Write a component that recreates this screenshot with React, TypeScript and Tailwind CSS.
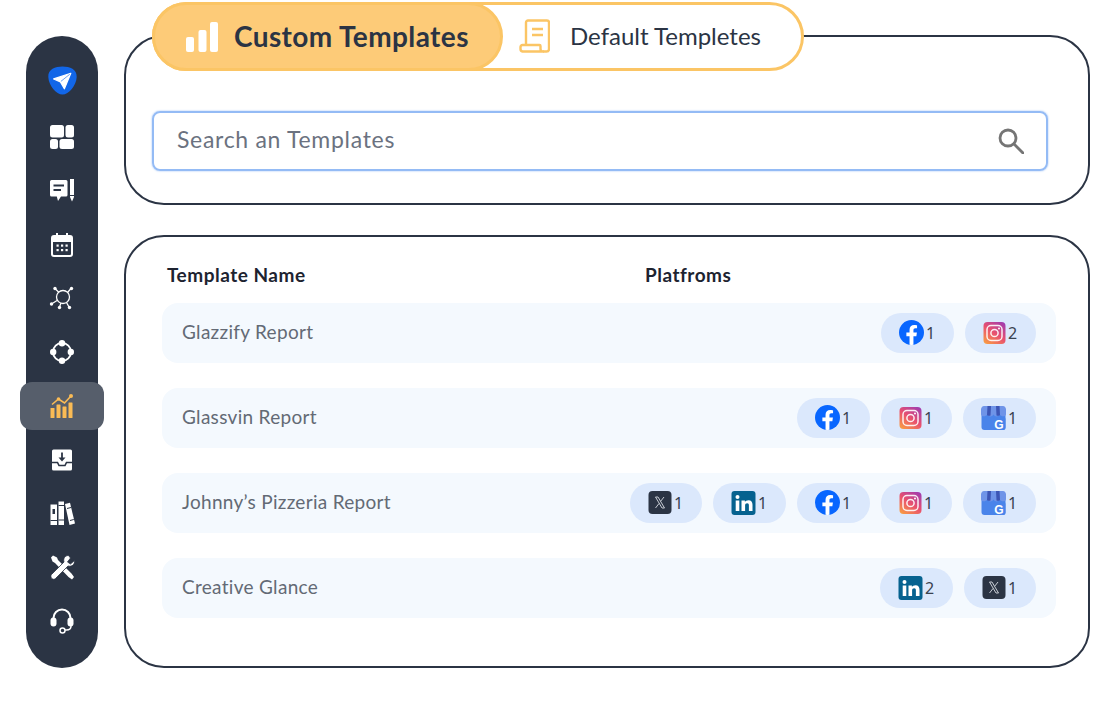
import React from 'react';

const navy = '#2b3444';

const SendLogo = () => (
  <svg width="29" height="29" viewBox="0 0 28 28">
    <path d="M14 0.500C21 0.500 28 3 27.700 10.500C27.400 18.500 20 27.500 14 27.500C8 27.500 0.600 18.500 0.300 10.500C0 3 7 0.500 14 0.500Z" fill="#1266e8" />
    <path d="M22 7L5.500 12.500L12 15.300L15.800 22Z" fill="#fff" stroke="#fff" strokeWidth="1.200" strokeLinejoin="round" />
    <path d="M21 8L12.500 14.800" stroke="#1266e8" strokeWidth="0.600" />
  </svg>
);

const GridIcon = () => (
  <svg width="24" height="24" viewBox="0 0 24 24" fill="#fff">
    <rect x="0" y="0" width="14" height="12.500" rx="2.500" />
    <rect x="15.500" y="0" width="8.500" height="12.500" rx="2.500" />
    <rect x="0" y="14" width="8" height="10" rx="2.500" />
    <rect x="9.500" y="14" width="14.500" height="10" rx="2.500" />
  </svg>
);

const CommentIcon = () => (
  <svg width="24" height="24" viewBox="0 0 24 24">
    <path d="M1.500 1H16a1.500 1.500 0 0 1 1.500 1.500V16a1.500 1.500 0 0 1-1.500 1.500h-5L8 22l-1.200-4.500H1.500A1.500 1.500 0 0 1 0 16V2.500A1.500 1.500 0 0 1 1.500 1Z" fill="#fff" />
    <path d="M3.500 6.500H14M3.500 11H11" stroke={navy} strokeWidth="1.800" />
    <path d="M20 0H24V18L22 22.500L20 18Z" fill="#fff" />
    <path d="M20 16.500H24" stroke={navy} strokeWidth="1" />
  </svg>
);

const CalendarIcon = () => (
  <svg width="24" height="24" viewBox="0 0 24 24" fill="#fff">
    <path d="M6 0h2v3H6zM16 0h2v3h-2z" />
    <path d="M4 2h16a3 3 0 0 1 3 3v16a3 3 0 0 1-3 3H4a3 3 0 0 1-3-3V5a3 3 0 0 1 3-3Zm-1 7v12a1 1 0 0 0 1 1h16a1 1 0 0 0 1-1V9Z" fillRule="evenodd" />
    <rect x="6.500" y="11.500" width="2.200" height="2.200" />
    <rect x="11" y="11.500" width="2.200" height="2.200" />
    <rect x="15.500" y="11.500" width="2.200" height="2.200" />
    <rect x="6.500" y="16" width="2.200" height="2.200" />
    <rect x="11" y="16" width="2.200" height="2.200" />
    <rect x="15.500" y="16" width="2.200" height="2.200" />
  </svg>
);

const HubIcon = () => (
  <svg width="26" height="26" viewBox="0 0 26 26" fill="#fff" stroke="#fff">
    <circle cx="14" cy="12" r="6.500" fill="none" strokeWidth="1.300" />
    <path d="M6 3.500L10 7.500M22 3.500L18.500 7.500M2.500 19L8 15.500M10.500 22L12 18M20 22L17.500 17.500" strokeWidth="1.300" fill="none" />
    <circle cx="6" cy="3.500" r="1.700" stroke="none" />
    <circle cx="22.500" cy="3.500" r="1.700" stroke="none" />
    <circle cx="2.500" cy="19" r="1.700" stroke="none" />
    <circle cx="10.500" cy="22.500" r="1.700" stroke="none" />
    <circle cx="20.500" cy="22.500" r="1.700" stroke="none" />
  </svg>
);

const OrbitIcon = () => (
  <svg width="24" height="24" viewBox="0 0 24 24" fill="#fff">
    <circle cx="12" cy="12" r="9" fill="none" stroke="#fff" strokeWidth="1.800" />
    <circle cx="12" cy="3.200" r="3.200" />
    <circle cx="12" cy="20.800" r="3.200" />
    <circle cx="3.200" cy="12" r="3.200" />
    <circle cx="20.800" cy="12" r="3.200" />
  </svg>
);

const ChartIcon = () => (
  <svg width="24" height="24" viewBox="0 0 24 24" fill="#fabb55">
    <rect x="0.500" y="14" width="4" height="10" rx="0.500" />
    <rect x="6.500" y="10.500" width="4" height="13.500" rx="0.500" />
    <rect x="12.500" y="12.500" width="4" height="11.500" rx="0.500" />
    <rect x="18.500" y="8.500" width="4" height="15.500" rx="0.500" />
    <path d="M2 10.500L8.500 5L14.500 9L21 2" fill="none" stroke="#fabb55" strokeWidth="1.600" />
    <circle cx="8.500" cy="5" r="1.800" />
    <circle cx="21" cy="2" r="2" />
  </svg>
);

const InboxIcon = () => (
  <svg width="24" height="24" viewBox="0 0 24 24">
    <rect x="2" y="1.500" width="20" height="21" rx="1.500" fill="#fff" />
    <path d="M12 4.500V11" stroke={navy} strokeWidth="1.800" />
    <path d="M8.500 9.500H15.500L12 13.500Z" fill={navy} />
    <path d="M2 14.500H7.500L9 17.500H15L16.500 14.500H22" fill="none" stroke={navy} strokeWidth="1.600" />
  </svg>
);

const BooksIcon = () => (
  <svg width="25" height="25" viewBox="0 0 25 25" fill="#fff">
    <path d="M0.500 3.500H7V24H0.500Z" />
    <path d="M8.500 0.500H14V24H8.500Z" />
    <path d="M15 3L20 1.800L25 22.500L19.500 24Z" />
    <path d="M2.500 8H5V13H2.500Z" fill={navy} />
    <path d="M8.500 4.500H14M8.500 19H14M0.500 19.500H7M17 7.500L21 6.500M20 19.500L23.800 18.500" stroke={navy} strokeWidth="1" />
  </svg>
);

const ToolsIcon = () => (
  <svg width="25" height="25" viewBox="0 0 25 25" fill="#fff">
    <path d="M1 2.500L3 0.500L7 2.500L8 5L21.500 18.500L24 22L22 24.500L18.500 22L5 8L2.500 6.500Z" />
    <path d="M24.500 5.500L20.500 9L17.500 7L20.500 3L18.500 0.500C15 0.500 13 3.500 14 7L1.500 19.500C-0.500 22 3 26 5.500 23.500L18 11C22 12 25 9.500 24.500 5.500Z" stroke={navy} strokeWidth="0.800" />
  </svg>
);

const HeadsetIcon = () => (
  <svg width="24" height="26" viewBox="0 0 24 26" fill="#fff">
    <path d="M3.500 11V10a8.500 8.500 0 0 1 17 0v1" fill="none" stroke="#fff" strokeWidth="2" />
    <rect x="0.500" y="9.500" width="6" height="9" rx="3" />
    <rect x="17.500" y="9.500" width="6" height="9" rx="3" />
    <path d="M21 18c0 2.500-2 4-4.500 4H15" fill="none" stroke="#fff" strokeWidth="1.500" />
    <circle cx="12.500" cy="22.500" r="2.500" fill="none" stroke="#fff" strokeWidth="1.500" />
  </svg>
);

const BarsIcon = () => (
  <svg width="32" height="30" viewBox="0 0 32 30" fill="#fff">
    <rect x="0" y="15" width="8" height="15" rx="2" />
    <rect x="12.500" y="8" width="8" height="22" rx="2" />
    <rect x="24" y="0" width="8" height="30" rx="2" />
  </svg>
);

const ScrollIcon = () => (
  <svg width="31" height="34" viewBox="0 0 31 34" fill="none" stroke="#fbc565" strokeWidth="2.400" strokeLinejoin="round">
    <path d="M7 26V3.500A2 2 0 0 1 9 1.500H28A2 2 0 0 1 30 3.500V30A2.500 2.500 0 0 1 27.500 32.500H24" />
    <path d="M3.500 26H20.500A1 1 0 0 1 21.500 27V30A2.500 2.500 0 0 0 24 32.500H3.500A2.500 2.500 0 0 1 1.500 30V28A2 2 0 0 1 3.500 26Z" />
    <path d="M13 10H24M13 16H24" />
  </svg>
);

const SearchIcon = () => (
  <svg width="26" height="26" viewBox="0 0 26 26" fill="none" stroke="#757575" strokeWidth="2.800">
    <circle cx="10" cy="10" r="8" />
    <path d="M16 16L25 25" strokeLinecap="round" />
  </svg>
);

const Facebook = () => (
  <svg width="25" height="25" viewBox="0 0 24 24">
    <clipPath id="fb-clip"><circle cx="12" cy="12" r="12" /></clipPath>
    <circle cx="12" cy="12" r="12" fill="#0866ff" />
    <path clipPath="url(#fb-clip)" d="M16.670 15.540L17.200 12.070H13.870V9.820C13.870 8.870 14.330 7.950 15.830 7.950H17.340V5C17.340 5 15.970 4.760 14.650 4.760C11.910 4.760 10.120 6.420 10.120 9.430V12.070H7.080V15.540H10.120V24H13.870V15.540Z" fill="#fff" />
  </svg>
);

const Instagram = () => (
  <svg width="23" height="22" viewBox="0 0 22 22">
    <defs>
      <linearGradient id="ig-grad" x1="0.150" y1="1" x2="0.850" y2="0">
        <stop offset="0" stopColor="#f89a45" />
        <stop offset="0.500" stopColor="#e8506f" />
        <stop offset="1" stopColor="#a23cae" />
      </linearGradient>
    </defs>
    <rect width="22" height="22" rx="4" fill="url(#ig-grad)" />
    <rect x="3.500" y="3.500" width="15" height="15" rx="4" fill="none" stroke="#fff" strokeWidth="1.500" opacity="0.900" />
    <circle cx="11" cy="11" r="3.600" fill="none" stroke="#fff" strokeWidth="1.500" opacity="0.900" />
    <circle cx="15.500" cy="6.500" r="1" fill="#fff" />
  </svg>
);

const BusinessProfile = () => (
  <svg width="25" height="24" viewBox="0 0 25 24">
    <rect x="0.500" y="4" width="24" height="20" rx="3" fill="#4a84ea" />
    <path d="M3 0H22C23.500 0 24.500 1 25 3V8C25 11 20 11 18.700 8.500C17 11 14 11 12.500 8.500C11 11 8 11 6.300 8.500C5 11 0 11 0 8V3C0.500 1 1.500 0 3 0Z" fill="#6f94e8" />
    <path d="M6.500 0H10L9.500 9.500C8.500 10 7 10 6 9ZM15 0H18.500L19 9C18 10 16.500 10 15.500 9.500Z" fill="#3c55b5" />
    <rect x="12" y="11" width="12.500" height="13" rx="2" fill="#4a84ea" />
    <text x="18" y="22.500" textAnchor="middle" fontFamily="'Liberation Sans', sans-serif" fontWeight="700" fontSize="12" fill="#fff">G</text>
  </svg>
);

const XLogo = () => (
  <svg width="24" height="23" viewBox="0 0 23 23">
    <rect width="23" height="23" rx="4" fill={navy} />
    <path d="M7 6H9.500L16 17H13.500Z" fill="none" stroke="#d7dbe2" strokeWidth="0.900" />
    <path d="M15.500 6L12.200 10.200M10.500 12.500L7 17" stroke="#d7dbe2" strokeWidth="0.900" />
  </svg>
);

const LinkedIn = () => (
  <svg width="25" height="24" viewBox="0 0 24 24">
    <rect width="24" height="24" rx="3" fill="#06628f" />
    <circle cx="6" cy="6" r="2" fill="#fff" />
    <rect x="4.200" y="9.500" width="3.600" height="10.500" fill="#fff" />
    <path d="M10 9.500H13.400V11C14 10 15.300 9.200 17 9.200C19.800 9.200 21 11 21 13.800V20H17.400V14.500C17.400 13.200 16.900 12.300 15.700 12.300C14.400 12.300 13.600 13.200 13.600 14.500V20H10Z" fill="#fff" />
  </svg>
);

const platformIcons = {
  facebook: <Facebook />,
  instagram: <Instagram />,
  business: <BusinessProfile />,
  x: <XLogo />,
  linkedin: <LinkedIn />,
};

type Platform = keyof typeof platformIcons;

const templates: { name: string; platforms: [Platform, number][] }[] = [
  { name: 'Glazzify Report', platforms: [['facebook', 1], ['instagram', 2]] },
  { name: 'Glassvin Report', platforms: [['facebook', 1], ['instagram', 1], ['business', 1]] },
  {
    name: 'Johnny’s Pizzeria Report',
    platforms: [['x', 1], ['linkedin', 1], ['facebook', 1], ['instagram', 1], ['business', 1]],
  },
  { name: 'Creative Glance', platforms: [['linkedin', 2], ['x', 1]] },
];

const navItems = [
  <GridIcon />,
  <CommentIcon />,
  <CalendarIcon />,
  <HubIcon />,
  <OrbitIcon />,
  <ChartIcon />,
  <InboxIcon />,
  <BooksIcon />,
  <ToolsIcon />,
  <HeadsetIcon />,
];

export default function App() {
  return (
    <div className="flex h-[701px] w-[1108px] gap-[26px] overflow-hidden bg-white pl-[26px] pt-[2px] font-['Lato',sans-serif]">
      {/* Sidebar */}
      <aside className="mt-[34px] flex h-[632px] w-[72px] flex-col items-center rounded-[36px] bg-[#2b3444] pt-[20px]">
        <div className="mb-[9px] flex h-[48px] items-center justify-center">
          <SendLogo />
        </div>
        <div className="flex flex-col gap-[5.78px]">
          {navItems.map((icon, i) => (
            <div
              key={i}
              className={`-mx-[6px] flex h-[48px] w-[84px] items-center justify-center rounded-[12px] ${
                i === 5 ? 'bg-[#565e6b]' : ''
              }`}
            >
              {icon}
            </div>
          ))}
        </div>
      </aside>

      <main className="w-[966px]">
        {/* Tabs */}
        <div className="relative z-10 mb-[-36px] ml-[28px] flex h-[69px] w-[652px] rounded-full border-[3px] border-[#fbc565] bg-white">
          <div className="-my-[3px] -ml-[3px] flex w-[351px] items-center rounded-full border-[3px] border-[#fbc565] bg-[#fdcb78] pl-[31px]">
            <BarsIcon />
            <span className="mb-[2px] ml-[16px] text-[28px] font-bold tracking-[0.4px] text-[#2b3444]">Custom Templates</span>
          </div>
          <div className="flex items-center pb-[2px] pl-[16px]">
            <ScrollIcon />
            <span className="ml-[20px] text-[24px] text-[#2b3444]">Default Templetes</span>
          </div>
        </div>

        {/* Search */}
        <section className="h-[170px] rounded-[40px] border-2 border-[#2b3444] pl-[26px] pt-[74px]">
          <div className="flex h-[60px] w-[896px] items-center rounded-[8px] border-2 border-[#94bbf5] pl-[23px] pr-[22px] shadow-[0_0_2px_#94bbf5]">
            <input
              placeholder="Search an Templates"
              className="flex-1 bg-transparent pb-[3px] text-[23px] tracking-[0.7px] outline-none placeholder:text-[#6b7280]"
            />
            <SearchIcon />
          </div>
        </section>

        {/* Templates table */}
        <section className="mt-[30px] h-[433px] rounded-[40px] border-2 border-[#2b3444] pl-[36px] pr-[32px] pt-[26px]">
          <div className="flex h-[24px] items-center pl-[5px] text-[19px] font-bold tracking-[0.5px] text-[#1d2330]">
            <span className="w-[478px]">Template Name</span>
            <span>Platfroms</span>
          </div>
          <div className="mt-[15.5px] flex flex-col gap-[25px]">
            {templates.map((t) => (
              <div
                key={t.name}
                className="flex h-[60px] items-center justify-between rounded-[16px] bg-[#f4f9fe] px-[20px]"
              >
                <span className="text-[19px] tracking-[0.3px] text-[#636a75]">{t.name}</span>
                <div className="flex gap-[11px]">
                  {t.platforms.map(([p, count], i) => (
                    <div
                      key={i}
                      className="flex h-[40px] items-center gap-[2px] rounded-full bg-[#dbe8fc] pl-[18px] pr-[20px] font-['Noto_Sans',sans-serif] text-[16px] text-[#3a4250]"
                    >
                      {platformIcons[p]}
                      <span className="w-[8px]">{count}</span>
                    </div>
                  ))}
                </div>
              </div>
            ))}
          </div>
        </section>
      </main>
    </div>
  );
}
